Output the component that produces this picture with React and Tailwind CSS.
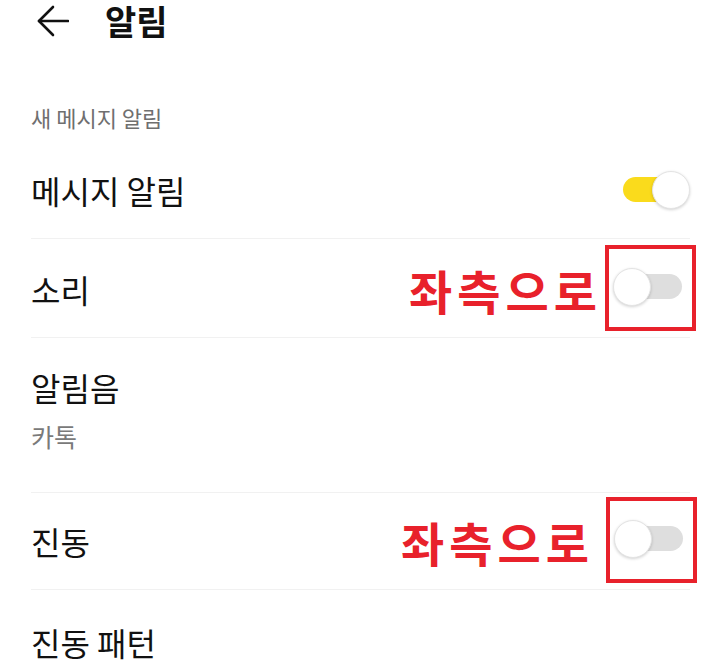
import React, { useState } from 'react'

const font = { fontFamily: '"Noto Sans CJK KR", "Noto Sans", sans-serif' }

function Toggle({ on, onChange }) {
    return (
        <button
            onClick={onChange}
            className='relative w-[77px] h-[38px] shrink-0'
        >
            <span className={`absolute left-[10px] right-[8px] top-[6px] h-[25px] rounded-full ${on ? 'bg-[#fadb1c]' : 'bg-[#dedede]'}`} />
            <span className={`absolute top-0 w-[38px] h-[38px] rounded-full bg-white border border-[#e4e4e4] shadow-[0_1px_3px_rgba(0,0,0,0.18)] ${on ? 'right-0' : 'left-0'}`} />
        </button>
    )
}

function Marker() {
    return <span className='pointer-events-none absolute -left-[8px] -top-[23px] w-[91px] h-[86px] border-[4px] border-[#e8212b]' />
}

function App() {
    const [msg, setMsg] = useState(true)
    const [sound, setSound] = useState(false)
    const [vibe, setVibe] = useState(false)

    return (
        <div className='w-[720px] h-[662px] overflow-hidden bg-white text-[#111]' style={font}>
            <div className='h-[42px] flex items-center pl-[37px] gap-[36px]'>
                <svg width='32' height='32' viewBox='0 0 32 32' fill='none' stroke='#111' strokeWidth='2.6' strokeLinecap='round' strokeLinejoin='round'>
                    <path d='M31 16H2' />
                    <path d='M16 2 2 16l14 14' />
                </svg>
                <h1 className='text-[34px] font-bold leading-[40px]'>알림</h1>
            </div>

            <div className='px-[31px] pr-[30px]'>
                <p className='pt-[63px] pb-[12px] text-[22px] leading-[24px] text-[#6f6f6f]'>새 메시지 알림</p>

                {/* 메시지 알림 */}
                <div className='h-[98px] flex items-center justify-between border-b border-[#f1f1f1]'>
                    <span className='text-[32px] leading-none'>메시지 알림</span>
                    <Toggle on={msg} onChange={() => setMsg(!msg)} />
                </div>

                {/* 소리 */}
                <div className='h-[99px] flex items-center border-b border-[#f1f1f1] pt-[2px]'>
                    <span className='text-[32px] leading-none'>소리</span>
                    <span className='ml-auto mr-[11px] text-[47px] font-bold leading-none text-[#e8212b] tracking-[5px]'>좌측으로</span>
                    <div className='relative'>
                        <Toggle on={sound} onChange={() => setSound(!sound)} />
                        <Marker />
                    </div>
                </div>

                {/* 알림음 */}
                <div className='h-[155px] flex flex-col border-b border-[#f1f1f1] pt-[31px]'>
                    <span className='text-[32px] leading-[36px]'>알림음</span>
                    <span className='mt-[17px] text-[25px] leading-[28px] text-[#7a7a7a]'>카톡</span>
                </div>

                {/* 진동 */}
                <div className='h-[97px] flex items-center border-b border-[#f1f1f1]'>
                    <span className='text-[32px] leading-none'>진동</span>
                    <span className='ml-auto mr-[20px] text-[47px] font-bold leading-none text-[#e8212b] tracking-[5px]'>좌측으로</span>
                    <div className='relative -mr-[1px]'>
                        <Toggle on={vibe} onChange={() => setVibe(!vibe)} />
                        <Marker />
                    </div>
                </div>

                {/* 진동 패턴 */}
                <div className='pt-[36px]'>
                    <span className='text-[32px] leading-none'>진동 패턴</span>
                </div>
            </div>
        </div>
    )
}

export default App
